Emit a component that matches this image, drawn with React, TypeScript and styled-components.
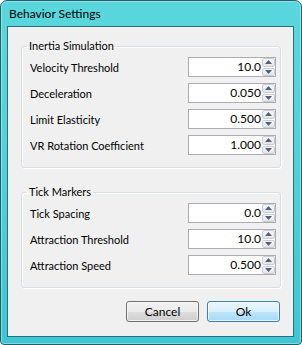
import styled, {createGlobalStyle} from "styled-components";

const GlobalStyle = createGlobalStyle`
    html, body {
        margin: 0;
        padding: 0;
        background: #ffffff;
    }
    * {
        box-sizing: border-box;
    }
`

const FONT = `"Segoe UI", Lato, "Noto Sans", "Liberation Sans", sans-serif`

type Field = {label: string, value: string}

const inertiaFields: Field[] = [
    {label: "Velocity Threshold", value: "10.0"},
    {label: "Deceleration", value: "0.050"},
    {label: "Limit Elasticity", value: "0.500"},
    {label: "VR Rotation Coefficient", value: "1.000"},
]

const tickFields: Field[] = [
    {label: "Tick Spacing", value: "0.0"},
    {label: "Attraction Threshold", value: "10.0"},
    {label: "Attraction Speed", value: "0.500"},
]

const Window = styled.div`
    width: 302px;
    height: 345px;
    display: flex;
    flex-direction: column;
    border: 1px solid #24606a;
    border-radius: 7px 7px 4px 4px;
    background: linear-gradient(180deg, #5ad7dd 0%, #52d3da 40%, #3ec6d3 100%);
    box-shadow: inset 0 0 0 1px rgba(255, 255, 255, 0.35);
    font-family: ${FONT};
`

const TitleBar = styled.div`
    height: 25px;
    flex: none;
    padding: 5px 0 0 8px;
    font-size: 12px;
    color: #000000;
`

const Client = styled.div`
    flex: 1;
    margin: 0 7px 7px 6px;
    border: 1px solid #2b6f7b;
    background: #f0f0f0;
    padding: 12px 12px 14px 13px;
    display: flex;
    flex-direction: column;
`

const Group = styled.fieldset<{$gap: number}>`
    margin: 0 0 ${props => props.$gap}px 0;
    padding: 4px 4px 12px 8px;
    border: 1px solid #d5dfe5;
    border-radius: 3px;
    box-shadow: inset 1px 1px 0 #ffffff, 1px 1px 0 #ffffff;
    display: flex;
    flex-direction: column;
    gap: 6px;
`

const Legend = styled.legend`
    margin-left: -3px;
    padding: 0 2px;
    font-size: 11px;
    line-height: 14px;
    color: #000000;
`

const Row = styled.div`
    display: flex;
    align-items: center;
    justify-content: space-between;
    height: 20px;
    font-size: 11px;
    color: #000000;
`

const SpinBox = styled.div`
    width: 88px;
    height: 20px;
    display: flex;
    border: 1px solid #abadb3;
    background: #ffffff;
`

const SpinValue = styled.div`
    flex: 1;
    text-align: right;
    padding: 1px 1px 0 0;
    font-size: 12px;
    line-height: 16px;
`

const SpinButtons = styled.div`
    width: 13px;
    display: flex;
    flex-direction: column;
    gap: 1px;
`

const SpinButton = styled.div`
    flex: 1;
    display: flex;
    align-items: center;
    justify-content: center;
    border: 1px solid #c9cbd0;
    border-radius: 2px;
    background: linear-gradient(180deg, #f7f7f7 0%, #e6e6e6 100%);
`

const Arrow = ({down = false}: {down?: boolean}) => <svg width="7" height="4" viewBox="0 0 7 4">
    <path d={down ? "M0 0 H7 L3.5 4 Z" : "M0 4 H7 L3.5 0 Z"} fill="#4d6185"/>
</svg>

const Spinner = ({value}: {value: string}) => <SpinBox>
    <SpinValue>{value}</SpinValue>
    <SpinButtons>
        <SpinButton><Arrow/></SpinButton>
        <SpinButton><Arrow down/></SpinButton>
    </SpinButtons>
</SpinBox>

const ButtonBar = styled.div`
    margin-top: auto;
    display: flex;
    justify-content: flex-end;
    gap: 8px;
    padding-right: 1px;
`

const Button = styled.div<{$default?: boolean}>`
    width: 73px;
    height: 21px;
    display: flex;
    align-items: center;
    justify-content: center;
    font-size: 12px;
    border-radius: 3px;
    border: 1px solid ${props => props.$default ? "#3c7fb1" : "#707070"};
    background: ${props => props.$default
        ? "linear-gradient(180deg, #eaf6fd 0%, #d9f0fc 50%, #bee6fd 51%, #a7d9f5 100%)"
        : "linear-gradient(180deg, #f2f2f2 0%, #ebebeb 50%, #dddddd 51%, #cfcfcf 100%)"};
    box-shadow: inset 0 0 0 1px rgba(255, 255, 255, 0.7);
`

const FieldGroup = ({title, fields, gap}: {title: string, fields: Field[], gap: number}) => <Group $gap={gap}>
    <Legend>{title}</Legend>
    {fields.map(field => <Row key={field.label}>
        {field.label}
        <Spinner value={field.value}/>
    </Row>)}
</Group>

const App = () => <>
    <GlobalStyle/>
    <Window>
        <TitleBar>Behavior Settings</TitleBar>
        <Client>
            <FieldGroup title="Inertia Simulation" fields={inertiaFields} gap={17}/>
            <FieldGroup title="Tick Markers" fields={tickFields} gap={0}/>
            <ButtonBar>
                <Button>Cancel</Button>
                <Button $default>Ok</Button>
            </ButtonBar>
        </Client>
    </Window>
</>

export default App
